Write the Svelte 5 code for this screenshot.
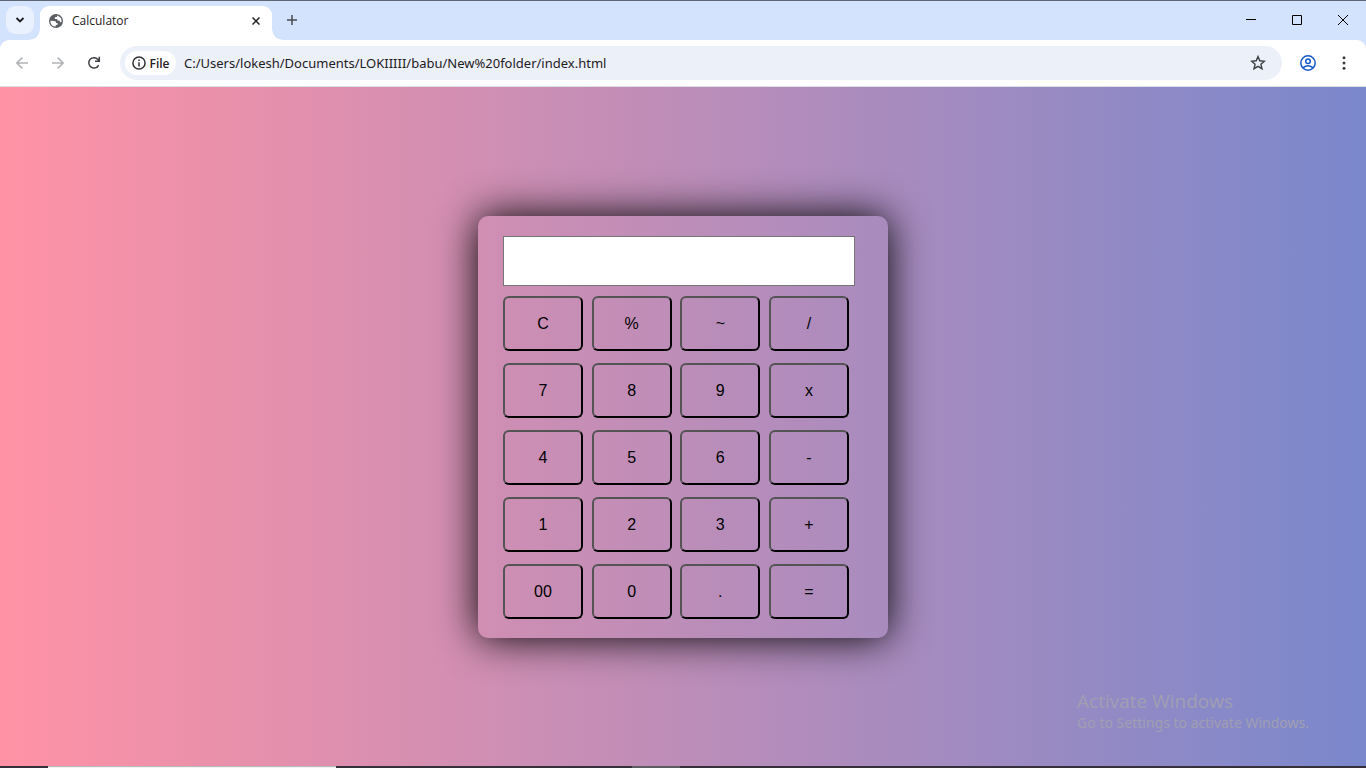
<script>
  const keys = ['C', '%', '~', '/', '7', '8', '9', 'x', '4', '5', '6', '-', '1', '2', '3', '+', '00', '0', '.', '='];
  let display = $state('');
  let address = $state('C:/Users/lokesh/Documents/LOKIIIII/babu/New%20folder/index.html');

  function press(key) {
    if (key === 'C') display = '';
    else if (key !== '=') display += key;
  }
</script>

<div class="window">
  <header class="tabstrip">
    <button class="tab-search" aria-label="Search tabs">
      <svg width="10" height="8" viewBox="0 0 10 8"><path d="M1.5 2 5 5.5 8.5 2" fill="none" stroke="#1b1c1f" stroke-width="1.8" /></svg>
    </button>
    <div class="tab">
      <svg class="globe" width="14" height="14" viewBox="0 0 14 14">
        <circle cx="7" cy="7" r="7" fill="#5b5e63" />
        <path d="M1.5 6.8 5.3 7.1Q7.1 7.3 7.1 9L8.8 9.2 8.6 10.8 6.8 11 6.7 12.6Q2.3 12.4 1.5 8.5Z" fill="#fff" />
        <path d="M8 1.5 7.9 3 5.8 3.3 5.9 5 8.2 5 8.4 6.4 10.6 6.6 11 8.2 12.6 8.1Q13.1 2.8 8 1.5Z" fill="#fff" />
      </svg>
      <span class="tab-title">Calculator</span>
      <button class="tab-close" aria-label="Close tab">
        <svg width="8" height="8" viewBox="0 0 8 8"><path d="M.5.5l7 7M7.5.5l-7 7" stroke="#1f2023" stroke-width="1.5" /></svg>
      </button>
    </div>
    <button class="new-tab" aria-label="New tab">
      <svg width="10" height="10" viewBox="0 0 10 10"><path d="M5 0v10M0 5h10" stroke="#474a50" stroke-width="1.5" /></svg>
    </button>
    <div class="window-controls">
      <button aria-label="Minimize"><svg width="10" height="10" viewBox="0 0 10 10"><path d="M0 4.5h10" stroke="#000" /></svg></button>
      <button aria-label="Maximize"><svg width="10" height="10" viewBox="0 0 10 10"><path d="M.5.5h9v9h-9z" fill="none" stroke="#000" /></svg></button>
      <button aria-label="Close"><svg width="10" height="10" viewBox="0 0 10 10"><path d="M0 0l10 10M10 0L0 10" stroke="#000" /></svg></button>
    </div>
  </header>

  <nav class="toolbar">
    <button class="tool" aria-label="Back">
      <svg width="12" height="12" viewBox="0 0 12 12"><path d="M12 6H1M6.3.6.9 6l5.4 5.4" fill="none" stroke="#b0b2b5" stroke-width="1.5" /></svg>
    </button>
    <button class="tool" aria-label="Forward">
      <svg width="12" height="12" viewBox="0 0 12 12"><path d="M0 6h11M5.7.6 11.1 6l-5.4 5.4" fill="none" stroke="#b0b2b5" stroke-width="1.5" /></svg>
    </button>
    <button class="tool" aria-label="Reload">
      <svg width="14" height="14" viewBox="0 0 14 14"><path d="M11.7 9.1A5.2 5.2 0 1 1 11 3.5L12.3 5M12.3.8V5.2H8" fill="none" stroke="#3e4044" stroke-width="1.5" /></svg>
    </button>
    <div class="omnibox">
      <button class="chip">
        <svg width="14" height="14" viewBox="0 0 14 14"><circle cx="7" cy="7" r="6.1" fill="none" stroke="#303236" stroke-width="1.5" /><path d="M7 6.2v4.2M7 3.5v1.6" stroke="#303236" stroke-width="1.5" /></svg>
        <span>File</span>
      </button>
      <input class="address" aria-label="Address" spellcheck="false" bind:value={address} />
      <button class="star" aria-label="Bookmark this page">
        <svg width="16" height="16" viewBox="0 0 16 16"><path d="M8 1.6 9.8 5.8 14.4 6.2 10.9 9.2 12 13.7 8 11.3 4 13.7 5.1 9.2 1.6 6.2 6.2 5.8Z" fill="none" stroke="#3e4044" stroke-width="1.4" /></svg>
      </button>
    </div>
    <button class="profile" aria-label="Profile">
      <svg width="16" height="16" viewBox="0 0 16 16" fill="none" stroke="#1559c9" stroke-width="1.5"><circle cx="8" cy="8" r="7.2" /><circle cx="8" cy="6.2" r="2.3" /><path d="M3 12.9Q8 8.6 13 12.9" /></svg>
    </button>
    <button class="more" aria-label="More">
      <svg width="4" height="14" viewBox="0 0 4 14" fill="#3e4044"><circle cx="2" cy="1.7" r="1.5" /><circle cx="2" cy="7" r="1.5" /><circle cx="2" cy="12.3" r="1.5" /></svg>
    </button>
  </nav>

  <main class="page">
    <section class="calculator" aria-label="Calculator">
      <input class="display" aria-label="Result" bind:value={display} />
      <div class="keys">
        {#each keys as key}
          <button class="key" onclick={() => press(key)}>{key}</button>
        {/each}
      </div>
    </section>
    <aside class="watermark">
      <p class="headline">Activate Windows</p>
      <p class="detail">Go to Settings to activate Windows.</p>
    </aside>
  </main>

  <footer class="taskbar">
    <span class="task-search"></span>
    <span class="task-active"></span>
  </footer>
</div>

<style>
  :global(body) {
    margin: 0;
  }

  .window {
    display: flex;
    flex-direction: column;
    height: 100vh;
    min-height: 560px;
    box-sizing: border-box;
    border-top: 1px solid #5f6573;
    background: #d3e2fd;
    font-family: "Open Sans", "Noto Sans", sans-serif;
    color: #1f2023;
  }

  button,
  input {
    font: inherit;
    color: inherit;
    margin: 0;
    box-sizing: border-box;
  }

  .tabstrip button,
  .toolbar button {
    display: flex;
    align-items: center;
    justify-content: center;
    padding: 0;
    border: 0;
    background: none;
  }

  .tabstrip {
    display: flex;
    height: 39px;
    flex: none;
    padding-left: 6px;
  }

  .tabstrip .tab-search {
    width: 28px;
    height: 28px;
    margin-top: 5px;
    border-radius: 9px;
    background: #e9f0fe;
  }

  .tab {
    position: relative;
    display: flex;
    align-items: center;
    width: 232px;
    margin: 5px 0 0 6px;
    padding: 0 10px 5px 9px;
    box-sizing: border-box;
    border-radius: 9px 9px 0 0;
    background: #fff;
  }

  .tab::before,
  .tab::after {
    content: "";
    position: absolute;
    bottom: 0;
    width: 10px;
    height: 10px;
  }

  .tab::before {
    right: 100%;
    background: radial-gradient(circle at 0 0, transparent 9px, #fff 10px);
  }

  .tab::after {
    left: 100%;
    background: radial-gradient(circle at 100% 0, transparent 9px, #fff 10px);
  }

  .tab-title {
    flex: 1;
    margin-left: 9px;
    font-size: 12px;
    line-height: 18px;
  }

  .tabstrip .tab-close {
    width: 12px;
    height: 16px;
  }

  .tabstrip .new-tab {
    width: 28px;
    height: 28px;
    margin: 5px 0 0 6px;
  }

  .window-controls {
    display: flex;
    margin-left: auto;
  }

  .window-controls button {
    width: 46px;
    height: 38px;
  }

  .toolbar {
    display: flex;
    align-items: center;
    flex: none;
    height: 47px;
    box-sizing: border-box;
    padding: 0 4px;
    border-bottom: 1px solid #dcdfe3;
    border-radius: 9px 9px 0 0;
    background: #fff;
  }

  .toolbar .tool {
    width: 36px;
    height: 34px;
  }

  .omnibox {
    display: flex;
    align-items: center;
    flex: 1;
    height: 34px;
    margin-left: 8px;
    padding: 0 16px 0 5px;
    border-radius: 17px;
    background: #ecf0f9;
  }

  .omnibox .chip {
    gap: 4px;
    width: 51px;
    height: 24px;
    border-radius: 12px;
    background: #fff;
    font-size: 12px;
    font-weight: 600;
  }

  .address {
    flex: 1;
    min-width: 0;
    height: 24px;
    margin-left: 8px;
    padding: 0;
    border: 0;
    outline: 0;
    background: none;
    font-family: "Noto Sans", "Open Sans", sans-serif;
    font-size: 13px;
  }

  .toolbar .profile {
    width: 36px;
    height: 34px;
    margin-left: 8px;
  }

  .toolbar .more {
    width: 36px;
    height: 34px;
  }

  .page {
    position: relative;
    display: flex;
    align-items: center;
    justify-content: center;
    flex: 1;
    background: linear-gradient(to right, #ff92a5, #7a88cc);
  }

  .calculator {
    width: 410px;
    box-sizing: border-box;
    padding: 20px 33px 19px 25px;
    border-radius: 10px;
    box-shadow: 0 0 40px #000;
    font-family: "Liberation Sans", Arial, sans-serif;
    font-size: 16px;
  }

  .display {
    display: block;
    width: 100%;
    height: 50px;
    margin-bottom: 10px;
    padding: 1px 8px;
    border: 1px solid #767676;
    background: #fff;
  }

  .keys {
    display: grid;
    grid-template-columns: repeat(4, 80px);
    justify-content: space-between;
    row-gap: 12px;
    margin-right: 6px;
  }

  .key {
    height: 55px;
    padding: 2px 0 0;
    border: 2px outset #000;
    border-radius: 6px;
    background: transparent;
    color: #000;
  }

  .watermark {
    position: absolute;
    right: 57px;
    bottom: 33px;
    color: #a09fb2;
    pointer-events: none;
  }

  .watermark p {
    margin: 0;
  }

  .headline {
    font-size: 19px;
    line-height: 24px;
  }

  .detail {
    font-family: "Noto Sans", "Open Sans", sans-serif;
    font-size: 14px;
    line-height: 20px;
  }

  .taskbar {
    display: flex;
    flex: none;
    height: 2px;
    padding-left: 48px;
    background: #35303a;
  }

  .task-search {
    width: 288px;
    box-sizing: border-box;
    border-top: 1px solid #b9b9b9;
    background: #f2f2f2;
  }

  .task-active {
    width: 48px;
    margin-left: 296px;
    background: #5d5c60;
  }
</style>
